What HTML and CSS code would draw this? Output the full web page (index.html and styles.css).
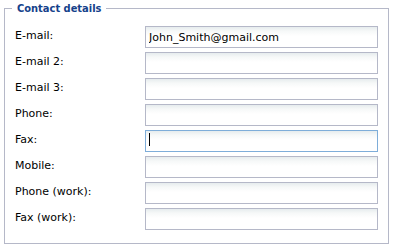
FILE: index.html
```html
<!DOCTYPE html>
<html>
<head>
<meta charset="utf-8">
<link rel="stylesheet" href="styles.css">
</head>
<body>
<fieldset class="contact">
  <legend class="contact-title">Contact details</legend>
  <div class="form-grid">
    <label class="field-label">E-mail:</label>
    <input class="text-field" type="text" value="John_Smith@gmail.com">
    <label class="field-label">E-mail 2:</label>
    <input class="text-field" type="text">
    <label class="field-label">E-mail 3:</label>
    <input class="text-field" type="text">
    <label class="field-label">Phone:</label>
    <input class="text-field" type="text">
    <label class="field-label">Fax:</label>
    <span class="focus-wrap"><input class="text-field focused" type="text"><span class="caret"></span></span>
    <label class="field-label">Mobile:</label>
    <input class="text-field" type="text">
    <label class="field-label">Phone (work):</label>
    <input class="text-field" type="text">
    <label class="field-label">Fax (work):</label>
    <input class="text-field" type="text">
  </div>
</fieldset>
</body>
</html>
```
FILE: styles.css
```css
html, body {
  margin: 0;
  padding: 0;
  background: #ffffff;
}
body {
  font-family: "DejaVu Sans", Tahoma, sans-serif;
  font-size: 11px;
  color: #000000;
}
.contact {
  margin: 2px 6px 0 4px;
  padding: 11px 10px 13px 10px;
  border: 1px solid #b5b8c8;
  min-width: 0;
}
.contact-title {
  margin-left: -3px;
  padding: 0 5px;
  font-family: "DejaVu Sans Condensed", "DejaVu Sans", sans-serif;
  font-weight: bold;
  font-size: 11px;
  line-height: 13px;
  color: #15428b;
}
.form-grid {
  display: grid;
  grid-template-columns: 130px 233px;
  grid-auto-rows: 22px;
  row-gap: 4px;
}
.field-label {
  line-height: 20px;
  white-space: nowrap;
}
.text-field {
  box-sizing: border-box;
  display: block;
  width: 233px;
  height: 22px;
  margin: 0;
  padding: 1px 3px;
  border: 1px solid #b5b8c8;
  border-radius: 0;
  background: linear-gradient(#e6ecee 0px, #f6f8f8 4px, #ffffff 9px);
  font-family: "DejaVu Sans", Tahoma, sans-serif;
  font-size: 11px;
  color: #000000;
  outline: none;
}
.text-field.focused {
  border-color: #7eadd9;
}
.focus-wrap {
  position: relative;
  display: block;
}
.caret {
  position: absolute;
  left: 4px;
  top: 3px;
  width: 1px;
  height: 13px;
  background: #000000;
}
```
